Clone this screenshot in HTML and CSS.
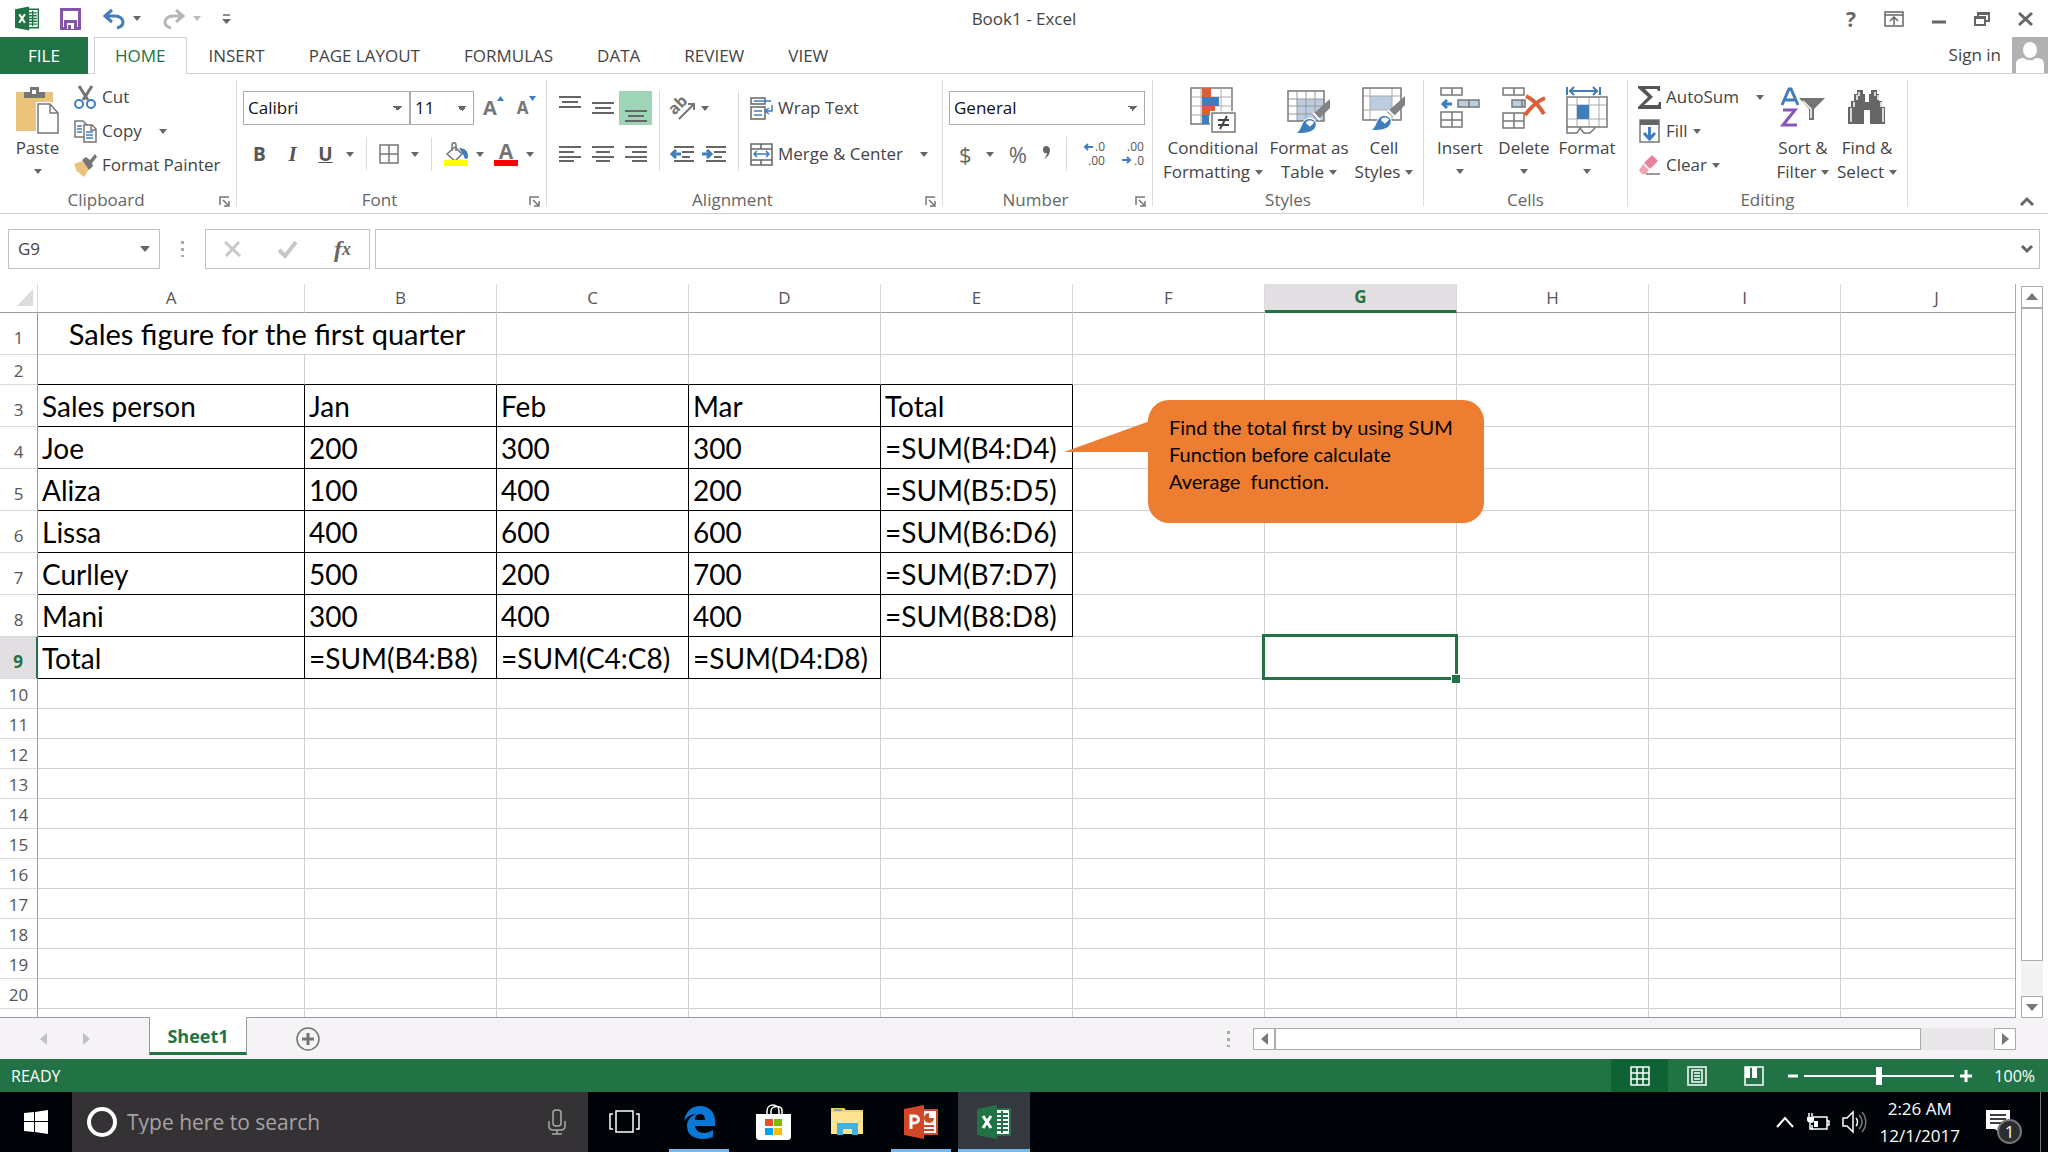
FILE: index.html
```html
<!DOCTYPE html>
<html lang="en">
<head>
  <meta charset="utf-8">
  <meta name="viewport" content="width=device-width, initial-scale=1">
  <title>Book1 - Excel</title>
  <link rel="stylesheet" href="styles.css">
</head>

<body>

  <!-- shared icons -->
  <svg class="defs" aria-hidden="true">
    <symbol id="excel" viewBox="0 0 34 34">
      <path d="M17 4h16v26H17z" fill="#fff" stroke="#217346" stroke-width="2"/>
      <path d="M19 9h12M19 13h12M19 17h12M19 21h12M19 25h12M25 6v22" stroke="#217346" stroke-width="2"/>
      <path d="M0 4L20 0v34L0 30z" fill="#217346"/>
      <path d="M6 11l8 12M14 11L6 23" stroke="#fff" stroke-width="3"/>
    </symbol>
    <symbol id="launcher" viewBox="0 0 11 11">
      <path d="M1 9V1h9M4 4l5 5M10 5v5H5" fill="none" stroke="#777" stroke-width="1.5"/>
    </symbol>
    <symbol id="brush" viewBox="0 0 34 34">
      <path d="M33 0v9L21 21l-6-5z" fill="#808285"/>
      <path d="M16 14l7 7" stroke="#fff" stroke-width="2"/>
      <path d="M0 34c5-3 4-12 11-14 7-1 10 5 6 10-4 4-11 4-17 4z" fill="#fff" stroke="#fff" stroke-width="2"/>
      <path d="M0 34c5-3 4-12 11-14 7-1 10 5 6 10-4 4-11 4-17 4z" fill="#3f7dbd"/>
      <path d="M9 24c1-3 5-3 8-1-1 3-3 3-4 5-1-2-3-2-4-4z" fill="#fff"/>
    </symbol>
  </svg>

  <header class="titlebar">
    <div class="quick">
      <svg width="24" height="25"><use href="#excel"/></svg>
      <button class="icon quickSave" aria-label="Save">
        <svg width="21" height="22" viewBox="0 0 21 22"><path d="M1.500 1.500h18v19h-18z" fill="#fff" stroke="#8555a8" stroke-width="3"/><path d="M4 12h13v9H4z" fill="#8555a8"/><path d="M7 15h7v6H7z" fill="#fff"/><path d="M8 17h3v4H8z" fill="#8555a8"/></svg>
      </button>
      <button class="icon quickUndo" aria-label="Undo">
        <svg width="22" height="20" viewBox="0 0 22 20"><path d="M9 1L2 7l7 6M3 7h9c5 0 8 3 8 6s-2 5-6 6" fill="none" stroke="#3f7dbd" stroke-width="3"/></svg>
        <span class="caret"></span>
      </button>
      <button class="icon quickRedo" aria-label="Redo">
        <svg width="22" height="20" viewBox="0 0 22 20"><path d="M13 1l7 6-7 6M19 7h-9c-5 0-8 3-8 6s2 5 6 6" fill="none" stroke="#b8b8b8" stroke-width="3"/></svg>
        <span class="caret pale"></span>
      </button>
      <button class="icon quickMore" aria-label="Customize">
        <svg width="9" height="10" viewBox="0 0 9 10"><path d="M1 1h7" stroke="#666" stroke-width="1.500"/><path d="M0 5h9L4.500 10z" fill="#666"/></svg>
      </button>
    </div>
    <div class="docTitle">Book1 - Excel</div>
    <div class="windowButtons">
      <button class="icon help" aria-label="Help">?</button>
      <button class="icon" aria-label="Ribbon display options"><svg width="20" height="16" viewBox="0 0 20 16" fill="none" stroke="#666" stroke-width="1.500"><path d="M1 1h18v14H1zM1 4h18M10 14V7M6 10l4-4 4 4"/></svg></button>
      <button class="icon" aria-label="Minimize"><svg width="14" height="16" viewBox="0 0 14 16"><path d="M0 11h14" stroke="#666" stroke-width="3"/></svg></button>
      <button class="icon" aria-label="Restore"><svg width="16" height="16" viewBox="0 0 16 16" fill="none" stroke="#666" stroke-width="2"><path d="M1 6h10v8H1zM4 6V2h11v8h-4M1 7h10M4 3h11"/></svg></button>
      <button class="icon" aria-label="Close"><svg width="15" height="16" viewBox="0 0 15 16"><path d="M1 2l13 12M14 2L1 14" stroke="#666" stroke-width="3"/></svg></button>
    </div>
  </header>

  <nav class="tabs">
    <button class="tab file">FILE</button>
    <button class="tab active">HOME</button>
    <button class="tab">INSERT</button>
    <button class="tab">PAGE LAYOUT</button>
    <button class="tab">FORMULAS</button>
    <button class="tab">DATA</button>
    <button class="tab">REVIEW</button>
    <button class="tab">VIEW</button>
    <a class="signIn" href="#">Sign in</a>
    <svg class="avatar" viewBox="0 0 36 36"><path d="M0 0h36v36H0z" fill="#b1b1b1"/><ellipse cx="18" cy="13" rx="7" ry="8" fill="#fff"/><path d="M4 36V27c0-4 3-6 8-6 3 3 9 3 12 0 5 0 8 2 8 6v9z" fill="#fff"/></svg>
  </nav>

  <main class="ribbon">
    <section class="group clipboard">
      <div class="groupBody">
        <button class="big paste">
          <svg width="44" height="47" viewBox="0 0 44 47">
            <path d="M0 5h37v39H0z" fill="#ebc47c"/><path d="M8 11V5h6V0h9v5h6v6z" fill="#757575"/><path d="M16 3h4v4h-4z" fill="#fff"/>
            <path d="M22 17h13l8 9v20H22z" fill="#fff" stroke="#fff" stroke-width="4"/><path d="M22 17h12l8 9v20H22zM34 17v9h8" fill="#fff" stroke="#777" stroke-width="1.500"/>
          </svg>
          <span>Paste</span><span class="caret"></span>
        </button>
        <div class="stack">
          <button class="small">
            <svg width="23" height="23" viewBox="0 0 23 23" fill="none"><path d="M5 0l9 14M18 0L9 14" stroke="#757575" stroke-width="3"/><circle cx="5" cy="18" r="4" stroke="#3f7dbd" stroke-width="2"/><circle cx="17" cy="18" r="4" stroke="#3f7dbd" stroke-width="2"/></svg>
            <span>Cut</span>
          </button>
          <button class="small">
            <svg width="23" height="23" viewBox="0 0 23 23" fill="#fff" stroke="#757575" stroke-width="1.500"><path d="M1 1h8l4 4v12H1z"/><path d="M3 6h5M3 9h5M3 12h5" stroke="#3f7dbd"/><path d="M10 5h8l4 4v13H10zM17 5v5h5"/><path d="M12 12h7M12 15h7M12 18h7" stroke="#3f7dbd"/></svg>
            <span>Copy</span><span class="caret far"></span>
          </button>
          <button class="small">
            <svg width="23" height="23" viewBox="0 0 23 23"><path d="M0 10l8-3 7 8-5 8-4-3-1-2-2 0z" fill="#ebc47c"/><path d="M8 6l4-3 4 3 5-6 2 3-5 6 1 3-4 4z" fill="#757575"/></svg>
            <span>Format Painter</span>
          </button>
        </div>
      </div>
      <div class="groupLabel hasLaunch">Clipboard<button class="launch" aria-label="Clipboard settings"><svg width="11" height="11"><use href="#launcher"/></svg></button></div>
    </section>

    <section class="group font">
      <div class="groupBody rows">
        <div class="row">
          <select class="box fontName" aria-label="Font"><option>Calibri</option></select>
          <select class="box fontSize" aria-label="Font size"><option>11</option></select>
          <button class="icon grow" aria-label="Increase font size"><b>A</b><svg width="7" height="5"><path d="M0 5h7L3.500 0z" fill="#3f7dbd"/></svg></button>
          <button class="icon shrink" aria-label="Decrease font size"><b>A</b><svg width="7" height="5"><path d="M0 0h7L3.500 5z" fill="#3f7dbd"/></svg></button>
        </div>
        <div class="row fontRow">
          <button class="icon letter"><b>B</b></button>
          <button class="icon letter italic"><b>I</b></button>
          <button class="icon letter underline"><b>U</b></button>
          <button class="icon underlineMore" aria-label="Underline style"><span class="caret"></span></button>
          <span class="bar"></span>
          <button class="icon borders" aria-label="Borders"><svg width="20" height="20" viewBox="0 0 20 20" fill="none" stroke="#757575" stroke-width="1.500"><path d="M1 1h18v18H1zM10 1v18M1 10h18"/></svg><span class="caret"></span></button>
          <span class="bar"></span>
          <button class="icon" aria-label="Fill color"><svg width="24" height="24" viewBox="0 0 24 24"><path d="M11 5l7 7-7 7-8-7z" fill="#fff" stroke="#757575" stroke-width="1.500"/><path d="M8 9V3c0-3 4-3 4 0v6" fill="none" stroke="#757575" stroke-width="1.500"/><path d="M15 6c7 0 9 4 9 8 0 4-4 4-4 0z" fill="#3f7dbd"/><path d="M0 18h24v6H0z" fill="#ff0"/></svg><span class="caret"></span></button>
          <button class="icon fontColorButton" aria-label="Font color"><span class="fontColor">A</span><span class="caret"></span></button>
        </div>
      </div>
      <div class="groupLabel hasLaunch">Font<button class="launch" aria-label="Font settings"><svg width="11" height="11"><use href="#launcher"/></svg></button></div>
    </section>

    <section class="group alignment">
      <div class="groupBody columns">
        <div class="rows alignCol">
          <div class="row">
            <button class="icon align" aria-label="Top align"><svg width="22" height="28"><path d="M0 3h22M3 8h16M0 13h22" stroke="#666" stroke-width="2"/></svg></button>
            <button class="icon align" aria-label="Middle align"><svg width="22" height="28"><path d="M0 9h22M3 14h16M0 19h22" stroke="#666" stroke-width="2"/></svg></button>
            <button class="icon align on" aria-label="Bottom align"><svg width="22" height="28"><path d="M0 17h22M3 22h16M0 27h22" stroke="#666" stroke-width="2"/></svg></button>
          </div>
          <div class="row">
            <button class="icon align" aria-label="Align left"><svg width="22" height="16"><path d="M0 1h22M0 6h15M0 11h22M0 15h15" stroke="#666" stroke-width="2"/></svg></button>
            <button class="icon align" aria-label="Center"><svg width="22" height="16"><path d="M0 1h22M4 6h14M0 11h22M4 15h14" stroke="#666" stroke-width="2"/></svg></button>
            <button class="icon align" aria-label="Align right"><svg width="22" height="16"><path d="M0 1h22M7 6h15M0 11h22M7 15h15" stroke="#666" stroke-width="2"/></svg></button>
          </div>
        </div>
        <div class="rows indentCol">
          <div class="row">
            <button class="icon" aria-label="Orientation"><svg width="26" height="24" viewBox="0 0 26 24"><text x="0" y="15" transform="rotate(-45 8 12)" class="abText">ab</text><path d="M9 23L24 8M18 8h6v6" fill="none" stroke="#757575" stroke-width="2"/></svg><span class="caret"></span></button>
          </div>
          <div class="row">
            <button class="icon" aria-label="Decrease indent"><svg width="24" height="16"><path d="M4 1h20M12 6h12M12 11h8M4 15h20" stroke="#666" stroke-width="2"/><path d="M11 8H2M6 4L2 8l4 4" fill="none" stroke="#3f7dbd" stroke-width="3"/></svg></button>
            <button class="icon indent" aria-label="Increase indent"><svg width="24" height="16"><path d="M4 1h20M12 6h12M12 11h8M4 15h20" stroke="#666" stroke-width="2"/><path d="M0 8h9M5 4l4 4-4 4" fill="none" stroke="#3f7dbd" stroke-width="3"/></svg></button>
          </div>
        </div>
        <div class="rows mergeCol">
          <div class="row">
            <button class="small"><svg width="23" height="23" viewBox="0 0 23 23" fill="none" stroke="#666" stroke-width="1.500"><path d="M1 1h14v6H1zM1 10h14v12H1z"/><path d="M4 4h17M4 14h8M4 18h8M22 8v6h-6M19 11l-4 3 4 3" stroke="#3f7dbd"/></svg><span>Wrap Text</span></button>
          </div>
          <div class="row">
            <button class="small"><svg width="23" height="23" viewBox="0 0 23 23" fill="none" stroke="#666" stroke-width="1.500"><path d="M1 1h21v21H1zM1 6h21M1 17h21M11 1v5M11 17v5"/><path d="M4 11h15M7 8l-3 3 3 3M16 8l3 3-3 3" stroke="#3f7dbd"/></svg><span>Merge &amp; Center</span><span class="caret far"></span></button>
          </div>
        </div>
      </div>
      <div class="groupLabel hasLaunch">Alignment<button class="launch" aria-label="Alignment settings"><svg width="11" height="11"><use href="#launcher"/></svg></button></div>
    </section>

    <section class="group number">
      <div class="groupBody rows">
        <div class="row"><select class="box numberFormat" aria-label="Number format"><option>General</option></select></div>
        <div class="row numberRow">
          <button class="icon sign">$<span class="caret"></span></button>
          <button class="icon sign">%</button>
          <button class="icon sign comma" aria-label="Comma style"><svg width="9" height="16" viewBox="0 0 9 16"><path d="M1 3c0-4 7-4 7 1 0 4-2 7-6 9 2-3 3-4 3-6-3 1-4-1-4-4z" fill="#666"/></svg></button>
          <span class="bar"></span>
          <button class="icon" aria-label="Increase decimal"><svg width="24" height="26" viewBox="0 0 24 26" class="decimals"><text x="12" y="10">.0</text><text x="5" y="24">.00</text><path d="M10 6H2M5 3L2 6l3 3" fill="none" stroke="#3f7dbd" stroke-width="2"/></svg></button>
          <button class="icon" aria-label="Decrease decimal"><svg width="24" height="26" viewBox="0 0 24 26" class="decimals"><text x="5" y="10">.00</text><text x="12" y="24">.0</text><path d="M0 19h8M5 16l3 3-3 3" fill="none" stroke="#3f7dbd" stroke-width="2"/></svg></button>
        </div>
      </div>
      <div class="groupLabel hasLaunch">Number<button class="launch" aria-label="Number settings"><svg width="11" height="11"><use href="#launcher"/></svg></button></div>
    </section>

    <section class="group styles">
      <div class="groupBody">
        <button class="big conditional">
          <svg width="46" height="47" viewBox="0 0 46 47">
            <path d="M1 1h41v36H1z" fill="#fff" stroke="#777" stroke-width="1.500"/><path d="M1 10h41M1 19h41M1 28h41M11 1v36M31 1v36" stroke="#aaa"/>
            <path d="M12 1h9v9h-9zM12 19h13v9H12z" fill="#d9603b"/><path d="M12 10h17v9H12zM12 28h7v9h-7z" fill="#3f7dbd"/>
            <path d="M20 24h26v23H20z" fill="#fff"/><path d="M22 26h23v19H22z" fill="#fff" stroke="#777" stroke-width="1.500"/><path d="M28 33h11M28 38h11M37 29l-7 13" stroke="#444" stroke-width="2"/>
          </svg>
          <span>Conditional</span><span>Formatting<span class="caret"></span></span>
        </button>
        <button class="big tableStyle">
          <svg width="44" height="47" viewBox="0 0 44 47">
            <path d="M1 4h36v30H1z" fill="#fff"/><path d="M10 12h27v22H10z" fill="#bccde1"/><path d="M1 12h36M1 19h36M1 27h36M10 4v30M19 4v30M28 4v30" stroke="#999"/><path d="M1 4h36v30H1z" fill="none" stroke="#777" stroke-width="1.500"/>
            <use href="#brush" x="10" y="12" width="34" height="34"/>
          </svg>
          <span>Format as</span><span>Table<span class="caret"></span></span>
        </button>
        <button class="big cellStyle">
          <svg width="44" height="47" viewBox="0 0 44 47">
            <path d="M1 1h38v32H1z" fill="#fff"/><path d="M8 9h22v14H8z" fill="#bccde1"/><path d="M1 9h38M1 23h38M8 1v32M30 1v32" stroke="#aaa"/><path d="M1 1h38v32H1z" fill="none" stroke="#777" stroke-width="1.500"/>
            <use href="#brush" x="10" y="9" width="34" height="34"/>
          </svg>
          <span>Cell</span><span>Styles<span class="caret"></span></span>
        </button>
      </div>
      <div class="groupLabel">Styles</div>
    </section>

    <section class="group cells">
      <div class="groupBody">
        <button class="big insert">
          <svg width="40" height="47" viewBox="0 0 40 47" fill="#fff" stroke="#777" stroke-width="1.500"><path d="M1 1h21v7H1zM12 1v7M1 25h21v15H1zM12 25v15M1 33h21"/><path d="M18 13h21v7H18zM29 13v7" fill="#bccde1"/><path d="M12 17H3M7 13l-4 4 4 4" fill="none" stroke="#3f7dbd" stroke-width="3"/></svg>
          <span>Insert</span><span class="caret"></span>
        </button>
        <button class="big delete">
          <svg width="45" height="47" viewBox="0 0 45 47" fill="#fff" stroke="#777" stroke-width="1.500"><path d="M1 1h21v7H1zM12 1v7M1 26h21v15H1zM12 26v15M1 34h21"/><path d="M10 13h13v7H10zM20 13v7" fill="#bccde1"/><path d="M24 9c8 4 14 11 18 18M43 11c-8 3-14 9-20 17" fill="none" stroke="#d9603b" stroke-width="4"/></svg>
          <span>Delete</span><span class="caret"></span>
        </button>
        <button class="big format">
          <svg width="42" height="47" viewBox="0 0 42 47"><path d="M1 10h40v30H1z" fill="#fff"/><path d="M1 18h40M1 32h40M11 10v30M23 10v30M33 10v30" stroke="#aaa"/><path d="M11 18h12v14H11z" fill="#3f7dbd"/><path d="M1 10h40v30H1zM1 40v6h10l3-5 4 5h6l5-5" fill="none" stroke="#777" stroke-width="1.500"/><path d="M1 0v8M34 0v8M3 4h29M8 0L4 4l4 4M27 0l4 4-4 4" fill="none" stroke="#3f7dbd" stroke-width="2"/></svg>
          <span>Format</span><span class="caret"></span>
        </button>
      </div>
      <div class="groupLabel">Cells</div>
    </section>

    <section class="group editing">
      <div class="groupBody">
        <div class="stack">
          <button class="small">
            <svg width="23" height="23" viewBox="0 0 23 23"><path d="M0 0h22v5h-2l-1-2H7l8 8-9 8h14l1-3h2v7H0v-2l10-10L0 2z" fill="#555"/></svg>
            <span>AutoSum</span><span class="caret far"></span>
          </button>
          <button class="small">
            <svg width="23" height="24" viewBox="0 0 23 24"><path d="M2 1h19v22H2z" fill="#fff" stroke="#777" stroke-width="1.500"/><path d="M2 1h19v5H2z" fill="#666"/><path d="M11.500 8v12M6 14l5.500 6 5.500-6" fill="none" stroke="#3f7dbd" stroke-width="3"/></svg>
            <span>Fill</span><span class="caret"></span>
          </button>
          <button class="small">
            <svg width="23" height="21" viewBox="0 0 23 21"><path d="M14 0l6 6-8 8-6-6z" fill="#e8819b"/><path d="M5 9l6 6-3 4H4l-3-4z" fill="#f0a5b6"/><path d="M8 19h14" stroke="#777" stroke-width="1.500"/></svg>
            <span>Clear</span><span class="caret"></span>
          </button>
        </div>
        <button class="big sort">
          <svg width="44" height="47" viewBox="0 0 44 47"><path d="M1 18L8 2h2l7 16M4 13h10" fill="none" stroke="#3f7dbd" stroke-width="3"/><path d="M2 23h12L2 38h14" fill="none" stroke="#8555b8" stroke-width="3"/><path d="M18 11h26L33 22v11h-5V22z" fill="#757575"/><path d="M22 14l8 8v9" fill="none" stroke="#fff" stroke-width="1.500"/></svg>
          <span>Sort &amp;</span><span>Filter<span class="caret"></span></span>
        </button>
        <button class="big find">
          <svg width="40" height="47" viewBox="0 0 40 47"><path d="M10 3h6v4h2v8h4V7h2V3h6v4h2v7h3v6h3v17H23V23h-6v14H1V20h3v-6h3V7h3z" fill="#666"/><path d="M12 5v4M7 15v5M4 21v14M28 5v4M34 15v5M36 21v14M10 8v5M31 8v5" stroke="#fff" stroke-width="1.500"/></svg>
          <span>Find &amp;</span><span>Select<span class="caret"></span></span>
        </button>
      </div>
      <div class="groupLabel">Editing</div>
    </section>

    <button class="icon collapse" aria-label="Collapse the ribbon"><svg width="14" height="9" viewBox="0 0 14 9"><path d="M1 8l6-6 6 6" fill="none" stroke="#666" stroke-width="3"/></svg></button>
  </main>

  <div class="formulaBar">
    <div class="nameBox">
      <input type="text" value="G9" aria-label="Name box"><span class="caret wide"></span>
    </div>
    <span class="dots"></span>
    <div class="formulaButtons">
      <button class="icon" aria-label="Cancel"><svg width="17" height="16" viewBox="0 0 17 16"><path d="M1 1l15 14M15 1L2 15" stroke="#c8c8c8" stroke-width="3"/></svg></button>
      <button class="icon" aria-label="Enter"><svg width="20" height="17" viewBox="0 0 20 17"><path d="M1 9l6 6L18 1" fill="none" stroke="#c8c8c8" stroke-width="4"/></svg></button>
      <button class="icon fx" aria-label="Insert function">f<sub>x</sub></button>
    </div>
    <div class="formulaInput">
      <input type="text" aria-label="Formula"><svg width="12" height="9" viewBox="0 0 12 9"><path d="M1 1l5 5 5-5" fill="none" stroke="#666" stroke-width="3"/></svg>
    </div>
  </div>

  <div class="work">
    <div class="sheet">
      <table class="grid">
        <colgroup><col class="colHead"><col class="colA"><col><col><col><col><col><col><col><col><col></colgroup>
        <thead>
          <tr><th class="corner"><svg width="16" height="17"><path d="M16 0v17H0z" fill="#dddbde"/></svg></th><th>A</th><th>B</th><th>C</th><th>D</th><th>E</th><th>F</th><th class="current">G</th><th>H</th><th>I</th><th>J</th></tr>
        </thead>
        <tbody>
          <tr class="tall"><th>1</th><td colspan="2" class="merged">Sales figure for the first quarter</td><td></td><td></td><td></td><td></td><td></td><td></td><td></td><td></td></tr>
          <tr class="above"><th>2</th><td></td><td></td><td></td><td></td><td></td><td></td><td></td><td></td><td></td><td></td></tr>
          <tr class="tall"><th>3</th><td class="b">Sales person</td><td class="b">Jan</td><td class="b">Feb</td><td class="b">Mar</td><td class="b">Total</td><td></td><td></td><td></td><td></td><td></td></tr>
          <tr class="tall"><th>4</th><td class="b">Joe</td><td class="b">200</td><td class="b">300</td><td class="b">300</td><td class="b">=SUM(B4:D4)</td><td></td><td></td><td></td><td></td><td></td></tr>
          <tr class="tall"><th>5</th><td class="b">Aliza</td><td class="b">100</td><td class="b">400</td><td class="b">200</td><td class="b">=SUM(B5:D5)</td><td></td><td></td><td></td><td></td><td></td></tr>
          <tr class="tall"><th>6</th><td class="b">Lissa</td><td class="b">400</td><td class="b">600</td><td class="b">600</td><td class="b">=SUM(B6:D6)</td><td></td><td></td><td></td><td></td><td></td></tr>
          <tr class="tall"><th>7</th><td class="b">Curlley</td><td class="b">500</td><td class="b">200</td><td class="b">700</td><td class="b">=SUM(B7:D7)</td><td></td><td></td><td></td><td></td><td></td></tr>
          <tr class="tall"><th>8</th><td class="b">Mani</td><td class="b">300</td><td class="b">400</td><td class="b">400</td><td class="b">=SUM(B8:D8)</td><td></td><td></td><td></td><td></td><td></td></tr>
          <tr class="tall"><th class="current">9</th><td class="b">Total</td><td class="b">=SUM(B4:B8)</td><td class="b">=SUM(C4:C8)</td><td class="b">=SUM(D4:D8)</td><td></td><td></td><td class="selected"></td><td></td><td></td><td></td></tr>
          <tr><th>10</th><td></td><td></td><td></td><td></td><td></td><td></td><td></td><td></td><td></td><td></td></tr>
          <tr><th>11</th><td></td><td></td><td></td><td></td><td></td><td></td><td></td><td></td><td></td><td></td></tr>
          <tr><th>12</th><td></td><td></td><td></td><td></td><td></td><td></td><td></td><td></td><td></td><td></td></tr>
          <tr><th>13</th><td></td><td></td><td></td><td></td><td></td><td></td><td></td><td></td><td></td><td></td></tr>
          <tr><th>14</th><td></td><td></td><td></td><td></td><td></td><td></td><td></td><td></td><td></td><td></td></tr>
          <tr><th>15</th><td></td><td></td><td></td><td></td><td></td><td></td><td></td><td></td><td></td><td></td></tr>
          <tr><th>16</th><td></td><td></td><td></td><td></td><td></td><td></td><td></td><td></td><td></td><td></td></tr>
          <tr><th>17</th><td></td><td></td><td></td><td></td><td></td><td></td><td></td><td></td><td></td><td></td></tr>
          <tr><th>18</th><td></td><td></td><td></td><td></td><td></td><td></td><td></td><td></td><td></td><td></td></tr>
          <tr><th>19</th><td></td><td></td><td></td><td></td><td></td><td></td><td></td><td></td><td></td><td></td></tr>
          <tr><th>20</th><td></td><td></td><td></td><td></td><td></td><td></td><td></td><td></td><td></td><td></td></tr>
          <tr><th></th><td></td><td></td><td></td><td></td><td></td><td></td><td></td><td></td><td></td><td></td></tr>
        </tbody>
      </table>

      <!-- callout shape floating over the cells -->
      <div class="callout">
        <svg class="calloutTail" width="86" height="32" viewBox="0 0 86 32"><path d="M0 31L86 0v31z" fill="#ed7d31"/></svg>
        Find the total first by using SUM<br>Function before calculate<br>Average&nbsp; function.
      </div>
    </div>

    <div class="vscroll">
      <button class="scrollButton" aria-label="Scroll up"><svg width="12" height="8"><path d="M0 7h12L6 0z" fill="#777"/></svg></button>
      <div class="vthumb"></div>
      <div class="vtrack"></div>
      <button class="scrollButton" aria-label="Scroll down"><svg width="12" height="8"><path d="M0 1h12L6 8z" fill="#777"/></svg></button>
    </div>
  </div>

  <div class="sheetBar">
    <button class="icon prevSheet" aria-label="Previous sheet"><svg width="7" height="12"><path d="M7 0v12L0 6z" fill="#c0bfc2"/></svg></button>
    <button class="icon nextSheet" aria-label="Next sheet"><svg width="7" height="12"><path d="M0 0v12l7-6z" fill="#c0bfc2"/></svg></button>
    <button class="sheetTab">Sheet1</button>
    <button class="icon addSheet" aria-label="New sheet"><svg width="24" height="24" viewBox="0 0 24 24" fill="none" stroke="#757575"><circle cx="12" cy="12" r="11" stroke-width="1.500"/><path d="M12 6v12M6 12h12" stroke-width="3"/></svg></button>
    <span class="dots"></span>
    <div class="hscroll">
      <button class="scrollButton" aria-label="Scroll left"><svg width="7" height="12"><path d="M7 0v12L0 6z" fill="#777"/></svg></button>
      <div class="hthumb"></div>
      <div class="htrack"></div>
      <button class="scrollButton" aria-label="Scroll right"><svg width="7" height="12"><path d="M0 0v12l7-6z" fill="#777"/></svg></button>
    </div>
  </div>

  <div class="statusBar">
    <span class="ready">READY</span>
    <button class="view on" aria-label="Normal view"><svg width="20" height="20" viewBox="0 0 20 20" fill="none" stroke="#fff" stroke-width="1.500"><path d="M1 1h18v18H1zM7 1v18M13 1v18M1 7h18M1 13h18"/></svg></button>
    <button class="view" aria-label="Page layout view"><svg width="20" height="20" viewBox="0 0 20 20" fill="none" stroke="#fff" stroke-width="1.500"><path d="M1 1h18v18H1zM5 4h10v12H5zM7 7h6M7 10h6M7 13h6"/></svg></button>
    <button class="view" aria-label="Page break view"><svg width="20" height="20" viewBox="0 0 20 20"><path d="M1 1h18v18H1z" fill="none" stroke="#fff" stroke-width="1.500"/><path d="M1 1h5v11H1zM8 1h5v11H8z" fill="#fff"/></svg></button>
    <button class="zoomButton" aria-label="Zoom out"><svg width="10" height="12"><path d="M0 6h10" stroke="#fff" stroke-width="3"/></svg></button>
    <input class="zoomSlider" type="range" min="10" max="190" value="100" aria-label="Zoom">
    <button class="zoomButton" aria-label="Zoom in"><svg width="12" height="12"><path d="M0 6h12M6 0v12" stroke="#fff" stroke-width="3"/></svg></button>
    <span class="zoomValue">100%</span>
  </div>

  <footer class="taskbar">
    <button class="task start" aria-label="Start"><svg width="24" height="24" viewBox="0 0 24 24" fill="#fff"><path d="M0 3l10-1v9H0zM11 2l13-2v11H11zM0 12h10v10L0 21zM11 12h13v12l-13-2z"/></svg></button>
    <div class="search">
      <svg width="32" height="32" viewBox="0 0 32 32"><circle cx="16" cy="16" r="13" fill="none" stroke="#fff" stroke-width="4"/></svg>
      <input type="text" placeholder="Type here to search" aria-label="Search">
      <svg width="18" height="26" viewBox="0 0 18 26" fill="none" stroke="#aaa" stroke-width="1.500"><rect x="5" y="1" width="8" height="16" rx="3"/><path d="M1 12v5c0 3 2 4 4 4h8c2 0 4-1 4-4v-5M9 21v4M4 25h10"/></svg>
    </div>
    <button class="task taskView" aria-label="Task view"><svg width="31" height="24" viewBox="0 0 31 24" fill="none" stroke="#fff" stroke-width="1.500"><path d="M7 1h17v21H7zM4 4H1v15h3M27 4h3v15h-3"/></svg></button>
    <button class="task running" aria-label="Edge"><svg width="31" height="33" viewBox="0 0 31 33"><path d="M0 15C2 5 8 0 16 0c10 0 15 7 15 15v5H11c1 5 5 7 9 7 3 0 6-1 9-3v7c-3 1-6 2-10 2C9 33 3 28 3 20 3 14 7 10 12 8 7 8 3 11 0 15zm11-1h10c0-4-2-6-5-6s-5 2-5 6z" fill="#0a78d4"/></svg></button>
    <button class="task" aria-label="Store"><svg width="35" height="36" viewBox="0 0 35 36"><path d="M11 12V7c0-8 12-8 12 0v5M15 12V7c0-6 12-6 11 0v5" fill="none" stroke="#fff" stroke-width="1.500"/><path d="M0 10h35v22c0 3-1 4-4 4H4c-3 0-4-1-4-4z" fill="#fff"/><path d="M9 15h8v7H9z" fill="#e8502a"/><path d="M18 15h8v7h-8z" fill="#7fba00"/><path d="M9 24h8v7H9z" fill="#00a4ef"/><path d="M18 24h8v7h-8z" fill="#ffb900"/></svg></button>
    <button class="task" aria-label="File Explorer"><svg width="33" height="28" viewBox="0 0 33 28"><path d="M0 0h13l2 2h17v24H0z" fill="#f5d36c"/><path d="M0 4h32v22H0z" fill="#fde492"/><path d="M3 2h8" stroke="#5a9fd4" stroke-width="1.500"/><path d="M6 15h21v12h-6v-6h-9v6H6z" fill="#3fb1e3"/></svg></button>
    <button class="task running" aria-label="PowerPoint"><svg width="34" height="34" viewBox="0 0 34 34"><path d="M18 5h15v24H18z" fill="#fff" stroke="#d24726" stroke-width="2"/><path d="M20 21h10M20 25h10" stroke="#d24726" stroke-width="2"/><circle cx="25" cy="13" r="5" fill="#d24726"/><path d="M25 13V7h6v6z" fill="#fff"/><path d="M0 4L20 0v34L0 30z" fill="#d24726"/><path d="M7 24V11h3c6 0 6 7 0 7H7" fill="none" stroke="#fff" stroke-width="3"/></svg></button>
    <button class="task running current" aria-label="Excel"><svg width="34" height="34"><use href="#excel"/></svg></button>
    <div class="tray">
      <button class="icon" aria-label="Show hidden icons"><svg width="18" height="12" viewBox="0 0 18 12"><path d="M1 11l8-9 8 9" fill="none" stroke="#fff" stroke-width="2"/></svg></button>
      <button class="icon" aria-label="Battery"><svg width="24" height="18" viewBox="0 0 24 18"><path d="M7 4h14v12H6v-4M21 8h2v4h-2" fill="none" stroke="#fff" stroke-width="1.500"/><path d="M1 4h7v3c0 2-1 3-3 3S1 9 1 7zM8 8h4v6H8z" fill="#fff"/><path d="M3 0v4M6 0v4M4 10v6h3" fill="none" stroke="#fff" stroke-width="1.500"/></svg></button>
      <button class="icon" aria-label="Volume"><svg width="25" height="22" viewBox="0 0 25 22" fill="none" stroke="#fff" stroke-width="1.500"><path d="M1 7h4l6-6v20l-6-6H1z"/><path d="M14 7c2 2 2 6 0 8"/><path d="M17 4c4 4 4 10 0 14M20 1c5 6 5 14 0 20" stroke="#777"/></svg></button>
      <div class="clock">2:26 AM<br>12/1/2017</div>
      <button class="icon notify" aria-label="Notifications"><svg width="24" height="24" viewBox="0 0 24 24"><path d="M0 0h24v19h-9v5l-6-5H0z" fill="#fff"/><path d="M4 5h16M4 9h16M4 13h12" stroke="#000" stroke-width="1.500"/></svg><span class="badge">1</span></button>
    </div>
  </footer>

</body>
</html>
```
FILE: styles.css
```css
* {
  box-sizing: border-box;
}

body {
  margin: 0;
  height: 100vh;
  display: flex;
  flex-direction: column;
  overflow: hidden;
  background: #fff;
  color: #444;
  font-family: "Open Sans", "Noto Sans", sans-serif;
  font-size: 17px;
  line-height: 24px;
}

button, input, select {
  font: inherit;
  color: inherit;
  margin: 0;
  padding: 0;
  border: 0;
  background: none;
  outline: none;
}

button {
  white-space: nowrap;
}

svg {
  display: block;
  flex: none;
  overflow: visible;
}

.defs {
  position: absolute;
  width: 0;
  height: 0;
}

.icon {
  display: flex;
  align-items: center;
}

.caret {
  display: inline-block;
  flex: none;
  border: 4px solid transparent;
  border-top: 5px solid #666;
  border-bottom: 0;
}
.caret.pale {
  border-top-color: #bbb;
}
.caret.wide {
  border-width: 6px 5px 0;
}

/* title bar */
.titlebar {
  flex: none;
  height: 37px;
  display: grid;
  grid-template-columns: 1fr auto 1fr;
  align-items: center;
}
.quick {
  display: flex;
  align-items: center;
  padding-left: 15px;
}
.quickSave { margin-left: 21px; }
.quickUndo { margin-left: 22px; gap: 8px; }
.quickRedo { margin-left: 22px; gap: 8px; }
.quickMore { margin-left: 21px; }
.windowButtons {
  display: flex;
  justify-content: flex-end;
  align-items: center;
  gap: 28px;
  padding-right: 15px;
}
.help {
  font-size: 21px;
  font-weight: bold;
  color: #666;
}

/* tabs */
.tabs {
  flex: none;
  display: flex;
  height: 37px;
  border-bottom: 1px solid #d0d0d2;
}
.tab {
  padding: 1px 22px 0;
}
.tab.file {
  width: 88px;
  height: 37px;
  margin-right: 6px;
  background: #217346;
  color: #fff;
}
.tab.active {
  height: 37px;
  padding: 0 20px;
  border: 1px solid #d0d0d2;
  border-bottom: 0;
  background: #fff;
  color: #217346;
}
.signIn {
  margin-left: auto;
  margin-right: 11px;
  line-height: 36px;
  color: #444;
  text-decoration: none;
}
.avatar {
  width: 36px;
  height: 36px;
}

/* ribbon */
.ribbon {
  flex: none;
  display: flex;
  height: 140px;
  padding: 6px 0 7px;
  border-bottom: 1px solid #d0d0d2;
}
.group {
  flex: none;
  display: flex;
  flex-direction: column;
  border-right: 1px solid #dcdcde;
}
.groupBody {
  flex: 1;
  display: flex;
}
.groupLabel {
  position: relative;
  height: 14px;
  line-height: 16px;
  text-align: center;
  color: #666;
}
.hasLaunch {
  padding-right: 24px;
}
.launch {
  position: absolute;
  right: 6px;
  top: 4px;
}
.clipboard { width: 237px; }
.font { width: 310px; }
.alignment { width: 396px; }
.number { width: 210px; }
.styles { width: 271px; }
.cells { width: 204px; }
.editing { width: 280px; }

.big {
  display: flex;
  flex-direction: column;
  align-items: center;
  padding-top: 7px;
}
.big > svg {
  margin-bottom: 2px;
}
.big .caret {
  margin-left: 5px;
  vertical-align: 3px;
}
.big > .caret {
  margin: 9px 0 0;
}
.paste { width: 75px; }
.clipboard .stack { margin-left: -1px; }
.styles .groupBody { padding-left: 8px; }
.conditional { width: 104px; }
.tableStyle { width: 88px; }
.cellStyle { width: 62px; }
.cells .groupBody { padding-left: 5px; }
.insert { width: 62px; }
.delete { width: 66px; }
.format { width: 60px; }
.editing .groupBody { padding-left: 10px; }
.editing .stack { width: 135px; }
.sort { width: 60px; }
.find { width: 68px; }

.small {
  display: flex;
  align-items: center;
  height: 34px;
  gap: 5px;
}
.small .far { margin-left: 12px; }

.rows {
  display: flex;
  flex-direction: column;
  gap: 12px;
  padding-top: 11px;
}
.row {
  display: flex;
  align-items: center;
  height: 34px;
}
.font .rows, .number .rows { padding-left: 6px; }
.box {
  appearance: none;
  height: 34px;
  padding-left: 4px;
  border: 1px solid #ababab;
  color: #111;
  background: linear-gradient(to bottom right, #666 50%, transparent 50%) right 6px center / 5px 5px no-repeat,
    linear-gradient(to bottom left, #666 50%, transparent 50%) right 11px center / 5px 5px no-repeat;
}
.fontName { width: 167px; }
.fontSize { width: 64px; }
.numberFormat { width: 196px; }
.grow, .shrink {
  align-items: flex-start;
  color: #757575;
}
.grow { margin-left: 9px; font-size: 20px; }
.shrink { margin-left: 13px; font-size: 17px; }
.bar {
  width: 1px;
  height: 34px;
  margin: 0 12px;
  background: #dcdcde;
}
.fontRow .icon { gap: 8px; }
.fontRow .letter {
  width: 33px;
  justify-content: center;
  font-size: 19px;
  color: #555;
}
.fontRow .italic {
  font-family: "Liberation Serif", serif;
  font-style: italic;
  font-size: 21px;
}
.underline { text-decoration: underline; }
.underlineMore { margin-left: 4px; }
.fontRow .borders { gap: 12px; }
.fontColorButton { margin-left: 10px; }
.fontColor {
  width: 24px;
  height: 24px;
  line-height: 18px;
  font-size: 21px;
  font-weight: bold;
  color: #757575;
  border-bottom: 6px solid #f00;
}
.alignCol {
  width: 112px;
  padding-left: 6px;
}
.align {
  width: 33px;
  height: 34px;
  justify-content: center;
}
.align.on { background: #9fd5b7; }
.indentCol {
  width: 79px;
  padding-left: 11px;
}
.indentCol .icon { gap: 5px; }
.indent { margin-left: 8px; }
.mergeCol { padding-left: 12px; }
.indentCol, .mergeCol {
  background: linear-gradient(#dcdcde, #dcdcde) left 11px / 1px 80px no-repeat;
}
.abText { font-size: 16px; font-weight: bold; fill: #757575; }
.numberRow {
  justify-content: space-between;
  padding: 0 6px 0 10px;
}
.numberRow .bar { margin: 0; }
.sign { font-size: 22px; gap: 14px; color: #666; }
.decimals { font-size: 12px; fill: #555; }
.collapse {
  margin-left: auto;
  margin-right: 14px;
  align-self: flex-end;
}

/* formula bar */
.formulaBar {
  flex: none;
  display: flex;
  align-items: center;
  height: 70px;
  padding: 0 8px;
}
.nameBox, .formulaButtons, .formulaInput {
  display: flex;
  align-items: center;
  height: 40px;
  border: 1px solid #c3c1c5;
}
.nameBox {
  width: 152px;
  padding: 0 9px;
}
.nameBox input { flex: 1; min-width: 0; }
.dots {
  width: 3px;
  height: 16px;
  margin: 0 21px;
  background: repeating-linear-gradient(#aaa 0 3px, transparent 3px 7px);
}
.formulaButtons {
  width: 165px;
  padding: 0 18px;
  justify-content: space-between;
}
.fx { font: italic bold 24px "Liberation Serif", serif; color: #666; }
.fx sub { font-size: 18px; line-height: 8px; }
.formulaInput {
  flex: 1;
  margin-left: 5px;
  padding: 0 6px;
}
.formulaInput input { flex: 1; }

/* sheet */
.work {
  flex: 1;
  min-height: 0;
  display: flex;
}
.sheet {
  flex: 1;
  min-width: 0;
  position: relative;
  overflow: hidden;
  border-right: 1px solid #ababab;
  border-bottom: 1px solid #9c9a9e;
}
.grid {
  width: 100%;
  table-layout: fixed;
  border-collapse: separate;
  border-spacing: 0;
}
.grid col { width: 192px; }
.grid .colHead { width: 38px; }
.grid .colA { width: 267px; }
.grid th {
  height: 30px;
  padding: 0 0 1px;
  font-weight: normal;
  color: #555;
  border-right: 1px solid #dad8dc;
  border-bottom: 1px solid #dad8dc;
}
.grid thead th {
  height: 29px;
  border-bottom-color: #9c9a9e;
}
.grid .corner svg { margin-left: 17px; }
.grid tbody th {
  border-right-color: #9c9a9e;
  vertical-align: bottom;
}
.grid th.current {
  background: #e1dfe2;
  color: #217346;
  font-weight: bold;
}
.grid thead th.current { border-bottom: 3px solid #217346; }
.grid tbody th.current { border-right: 2px solid #217346; }
.grid td {
  height: 30px;
  padding: 0 4px;
  border-right: 1px solid #d2d0d4;
  border-bottom: 1px solid #d2d0d4;
  color: #000;
  font-family: Lato, sans-serif;
  font-size: 28px;
  line-height: 36px;
  white-space: nowrap;
  vertical-align: bottom;
}
.grid .tall th {
  height: 42px;
  padding-bottom: 4px;
}
.grid .tall td {
  height: 42px;
  padding-bottom: 2px;
}
.grid td.merged {
  font-size: 29px;
  text-align: center;
}
.grid td.b,
.above td:nth-child(-n+6) {
  border-bottom-color: #000;
}
.grid td.b { border-right-color: #000; }
.selected { position: relative; }
.selected::before {
  content: "";
  position: absolute;
  inset: -3px -2px -2px -3px;
  border: 3px solid #217346;
}
.selected::after {
  content: "";
  position: absolute;
  right: -4px;
  bottom: -5px;
  width: 8px;
  height: 8px;
  background: #217346;
  border: solid #fff;
  border-width: 1px 0 0 1px;
}

.callout {
  position: absolute;
  left: 1148px;
  top: 116px;
  width: 336px;
  height: 123px;
  padding: 14px 0 0 21px;
  border-radius: 21px;
  background: #ed7d31;
  color: #000;
  font-family: Lato, sans-serif;
  font-size: 20px;
  line-height: 27px;
  white-space: nowrap;
}
.calloutTail {
  position: absolute;
  left: -84px;
  top: 21px;
}

/* scroll bars */
.vscroll {
  flex: none;
  width: 22px;
  margin: 2px 5px 0;
  display: flex;
  flex-direction: column;
  background: #f3f2f4;
}
.scrollButton {
  flex: none;
  display: flex;
  align-items: center;
  justify-content: center;
  width: 22px;
  height: 22px;
  border: 1px solid #ababab;
  background: #fff;
}
.vthumb {
  flex: 653;
  border: 1px solid #ababab;
  background: #fff;
}
.vtrack { flex: 35; }

.sheetBar {
  flex: none;
  display: flex;
  align-items: center;
  height: 41px;
  padding-right: 32px;
  background: #f5f3f5;
}
.prevSheet { margin-left: 40px; }
.nextSheet { margin-left: 36px; }
.sheetTab {
  align-self: flex-start;
  width: 98px;
  height: 38px;
  margin: -1px 0 0 59px;
  padding-top: 3px;
  position: relative;
  border: 1px solid #9c9a9e;
  border-top: 0;
  border-bottom: 3px solid #217346;
  background: #fff;
  color: #217346;
  font-size: 18px;
  font-weight: bold;
}
.addSheet { margin-left: 49px; }
.sheetBar .dots { margin: 0 23px 0 auto; }
.hscroll {
  width: 763px;
  display: flex;
  background: #e9e7ea;
}
.hthumb {
  flex: 645;
  border: 1px solid #ababab;
  background: #fff;
}
.htrack { flex: 73; }

/* status bar */
.statusBar {
  flex: none;
  display: flex;
  align-items: center;
  height: 33px;
  padding-right: 13px;
  background: #217346;
  color: #fff;
  font-size: 16px;
}
.ready { margin: 0 auto 0 11px; }
.view {
  display: flex;
  align-items: center;
  justify-content: center;
  width: 57px;
  height: 33px;
}
.view.on { background: #0f6234; }
.zoomButton { margin-left: 6px; }
.zoomSlider {
  appearance: none;
  width: 150px;
  height: 18px;
  margin-left: 6px;
  background: linear-gradient(#fff, #fff) center / 100% 2px no-repeat;
}
.zoomSlider::-webkit-slider-thumb {
  appearance: none;
  width: 6px;
  height: 18px;
  background: #fff;
}
.zoomValue { margin-left: 22px; }

/* taskbar */
.taskbar {
  flex: none;
  display: flex;
  height: 60px;
  background: #000308;
  color: #fff;
}
.task {
  display: flex;
  align-items: center;
  justify-content: center;
  width: 60px;
  margin-right: 14px;
}
.start { width: 72px; margin: 0; }
.search {
  width: 516px;
  display: flex;
  align-items: center;
  padding: 0 22px 0 14px;
  background: #353235;
}
.search input {
  flex: 1;
  margin-left: 9px;
  font-size: 21px;
}
.search input::placeholder { color: #a5a3a5; opacity: 1; }
.taskView { width: 72px; margin: 0 9px 0 0; }
.running { border-bottom: 3px solid #76b9ed; padding-top: 3px; }
.task.current { width: 72px; margin: 0 0 0 -7px; background: #35383f; }
.tray {
  display: flex;
  align-items: center;
  gap: 12px;
  margin-left: auto;
  margin-right: 7px;
  padding-right: 18px;
  border-right: 1px solid #777;
}
.clock {
  font-size: 17px;
  line-height: 27px;
  text-align: center;
}
.notify { position: relative; margin: 0 12px 0 14px; }
.badge {
  position: absolute;
  left: 11px;
  top: 9px;
  width: 25px;
  height: 25px;
  border: 2px solid #777;
  border-radius: 50%;
  background: #2b2d31;
  font-size: 17px;
  line-height: 21px;
  text-align: center;
}
```
